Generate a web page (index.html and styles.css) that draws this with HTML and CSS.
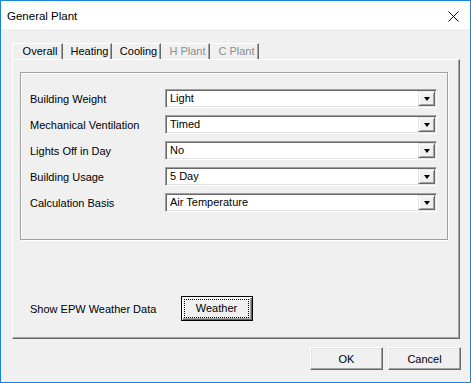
FILE: index.html
```html
<!DOCTYPE html>
<html lang="en">
<head>
    <meta charset="UTF-8">
    <meta name="viewport" content="width=device-width, initial-scale=1.0">
    <title>General Plant</title>
    <link rel="stylesheet" href="styles.css">
</head>
<body>
    <div class="window">
        <div class="titlebar">
            <span class="title">General Plant</span>
            <svg class="close" width="11" height="11" viewBox="0 0 11 11">
                <path d="M0.5 0.5 L10.5 10.5 M10.5 0.5 L0.5 10.5" stroke="#000" stroke-width="1" fill="none"/>
            </svg>
        </div>
        <div class="content">
            <div class="tabs">
                <div class="tab tab-active">Overall</div>
                <div class="tab">Heating</div>
                <div class="tab">Cooling</div>
                <div class="tab tab-disabled">H Plant</div>
                <div class="tab tab-disabled">C Plant</div>
            </div>
            <div class="panel">
                <div class="group">
                    <div class="field">
                        <span class="label">Building Weight</span>
                        <div class="combo"><span class="combo-value">Light</span><span class="combo-btn"><span class="arrow"></span></span></div>
                    </div>
                    <div class="field">
                        <span class="label">Mechanical Ventilation</span>
                        <div class="combo"><span class="combo-value">Timed</span><span class="combo-btn"><span class="arrow"></span></span></div>
                    </div>
                    <div class="field">
                        <span class="label">Lights Off in Day</span>
                        <div class="combo"><span class="combo-value">No</span><span class="combo-btn"><span class="arrow"></span></span></div>
                    </div>
                    <div class="field">
                        <span class="label">Building Usage</span>
                        <div class="combo"><span class="combo-value">5 Day</span><span class="combo-btn"><span class="arrow"></span></span></div>
                    </div>
                    <div class="field">
                        <span class="label">Calculation Basis</span>
                        <div class="combo"><span class="combo-value">Air Temperature</span><span class="combo-btn"><span class="arrow"></span></span></div>
                    </div>
                </div>
                <div class="weather-row">
                    <span class="label">Show EPW Weather Data</span>
                    <button class="btn btn-default"><span class="focus">Weather</span></button>
                </div>
            </div>
            <div class="actions">
                <button class="btn">OK</button>
                <button class="btn">Cancel</button>
            </div>
        </div>
    </div>
</body>
</html>
```

FILE: styles.css
```css
* {
    margin: 0;
    padding: 0;
    box-sizing: border-box;
}

body {
    font-family: "Liberation Sans", Arial, sans-serif;
    font-size: 11px;
    color: #000;
    background: #fff;
}

.window {
    width: 471px;
    height: 383px;
    border: 1px solid #1883d7;
    display: flex;
    flex-direction: column;
}

.titlebar {
    height: 28px;
    background: #fff;
    display: flex;
    align-items: center;
    justify-content: space-between;
    padding: 0 11px 0 6px;
}
.title {
    font-size: 11.5px;
    padding-top: 2px;
}
.close {
    display: block;
    margin-top: 3px;
}

.content {
    flex: 1;
    background: #f0f0f0;
    padding: 11px 10px 12px 11px;
    display: flex;
    flex-direction: column;
}

/* tab strip */
.tabs {
    height: 19px;
    display: flex;
    align-items: flex-end;
}
.tab {
    width: 49px;
    height: 16px;
    line-height: 15px;
    text-align: center;
    padding-left: 5px;
    border-top: 1px solid #fff;
    border-right: 1px solid #696969;
    box-shadow: inset -1px 0 0 #a0a0a0;
}
.tab-active {
    width: 51px;
    border-left: 1px solid #fff;
}
.tab-disabled {
    color: #8d8d8d;
}

.panel {
    flex: 1;
    border: 1px solid;
    border-color: #fff #696969 #696969 #fff;
    box-shadow: inset -1px -1px 0 #a0a0a0;
    padding: 12px 11px 0 7px;
}

/* group box with the dropdowns */
.group {
    border: 1px solid #a0a0a0;
    box-shadow: 1px 1px 0 #fff, inset 1px 1px 0 #fff;
    padding: 16px 10px 27px 9px;
    display: flex;
    flex-direction: column;
    gap: 7px;
}
.field {
    display: grid;
    grid-template-columns: 135px 1fr;
    align-items: center;
    height: 19px;
}

.combo {
    height: 19px;
    background: #fff;
    border: 1px solid;
    border-color: #a0a0a0 #fff #fff #a0a0a0;
    box-shadow: inset 1px 1px 0 #696969, inset -1px -1px 0 #e3e3e3;
    padding: 1px;
    display: flex;
}
.combo-value {
    flex: 1;
    padding-left: 3px;
    line-height: 15px;
}
.combo-btn {
    width: 17px;
    background: #f0f0f0;
    border: 1px solid;
    border-color: #e3e3e3 #696969 #696969 #e3e3e3;
    box-shadow: inset 1px 1px 0 #fff, inset -1px -1px 0 #a0a0a0;
    display: flex;
    align-items: center;
    justify-content: center;
}
.arrow {
    width: 0;
    height: 0;
    border-left: 3.5px solid transparent;
    border-right: 3.5px solid transparent;
    border-top: 4px solid #000;
}

.weather-row {
    display: flex;
    align-items: center;
    margin-top: 56px;
    padding-left: 10px;
}
.weather-row .label {
    width: 151px;
}

/* buttons */
.btn {
    font-family: inherit;
    font-size: 11px;
    color: #000;
    width: 73px;
    height: 23px;
    background: #f0f0f0;
    border: 1px solid;
    border-color: #fff #696969 #696969 #fff;
    box-shadow: inset -1px -1px 0 #a0a0a0, inset 1px 1px 0 #e3e3e3;
}
.btn-default {
    width: 72px;
    height: 25px;
    border: 1px solid #000;
    box-shadow: inset 1px 1px 0 #fff, inset -1px -1px 0 #696969, inset -2px -2px 0 #a0a0a0;
    padding: 2px;
}
.focus {
    display: block;
    height: 100%;
    border: 1px dotted #000;
    line-height: 17px;
    margin: 0 1px 1px 0;
}

.actions {
    display: flex;
    justify-content: flex-end;
    gap: 5px;
    margin-top: 8px;
    margin-right: -1px;
}
```
